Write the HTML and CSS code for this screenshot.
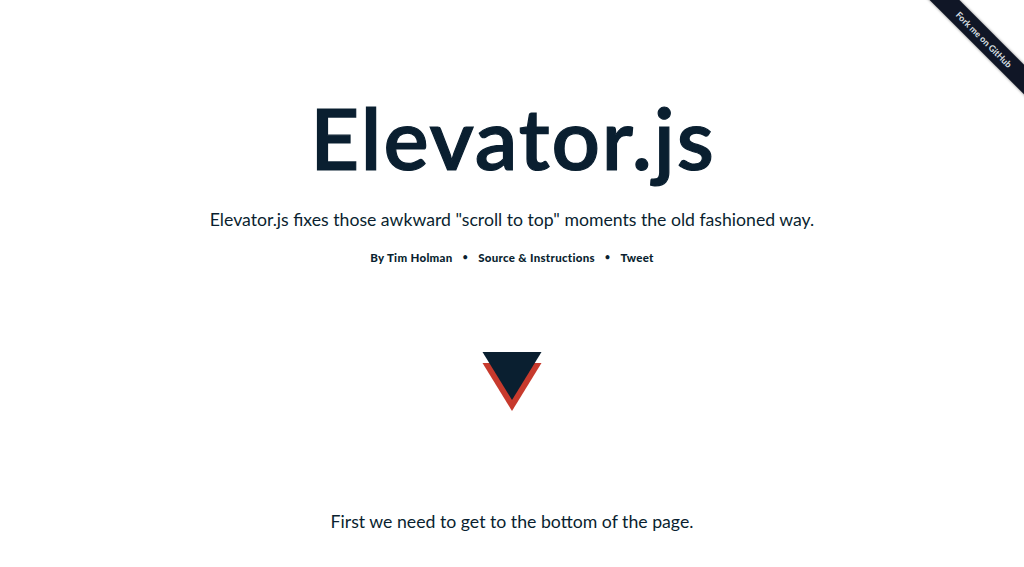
FILE: index.html
```html
<!DOCTYPE html>
<html lang="en">
<head>
<meta charset="utf-8">
<title>Elevator.js</title>
<link rel="stylesheet" href="styles.css">
</head>
<body>
<a class="ribbon">Fork me on GitHub</a>
<main class="page">
<h1 class="title">Elevator.js</h1>
<p class="tagline">Elevator.js fixes those awkward "scroll to top" moments the old fashioned way.</p>
<nav class="links"><a>By Tim Holman</a><span class="dot">•</span><a>Source &amp; Instructions</a><span class="dot">•</span><a>Tweet</a></nav>
<svg class="arrow" viewBox="0 0 60 60"><path d="M0.5 12h59L30 60z" fill="#c73a2d"/><path d="M0.5 1h59L30 49z" fill="#0a1f30"/></svg>
<p class="hint">First we need to get to the bottom of the page.</p>
</main>
</body>
</html>
```
FILE: styles.css
```css
body { margin: 0; background: #fff; color: #0a1f30; font-family: Lato, sans-serif; overflow: hidden; }
.page { display: flex; flex-direction: column; align-items: center; height: 567px; padding-top: 84px; box-sizing: border-box; white-space: nowrap; }
.title { margin: 0; padding-left: 2px; font-size: 85px; line-height: 106px; font-weight: 600; letter-spacing: 1.9px; -webkit-text-stroke: 1.2px #0a1f30; }
.tagline { margin: 18px 0 0; font-size: 17.65px; line-height: 24px; }
.links { display: flex; margin-top: 17px; font-size: 11.5px; line-height: 17px; font-weight: 900; letter-spacing: 0.3px; }
.dot { width: 25.5px; text-align: center; font-size: 8.5px; }
.arrow { width: 60px; height: 60px; margin-top: 85px; }
.hint { margin: 99px 0 0; font-size: 17.7px; line-height: 24px; }
.ribbon { position: absolute; top: 29px; right: -50px; width: 180px; height: 21px; transform: rotate(45deg); background: #101626; color: #dde1e6; font-size: 8.8px; line-height: 21px; font-weight: 700; text-align: center; box-shadow: 0 0 3px #777; }
```
